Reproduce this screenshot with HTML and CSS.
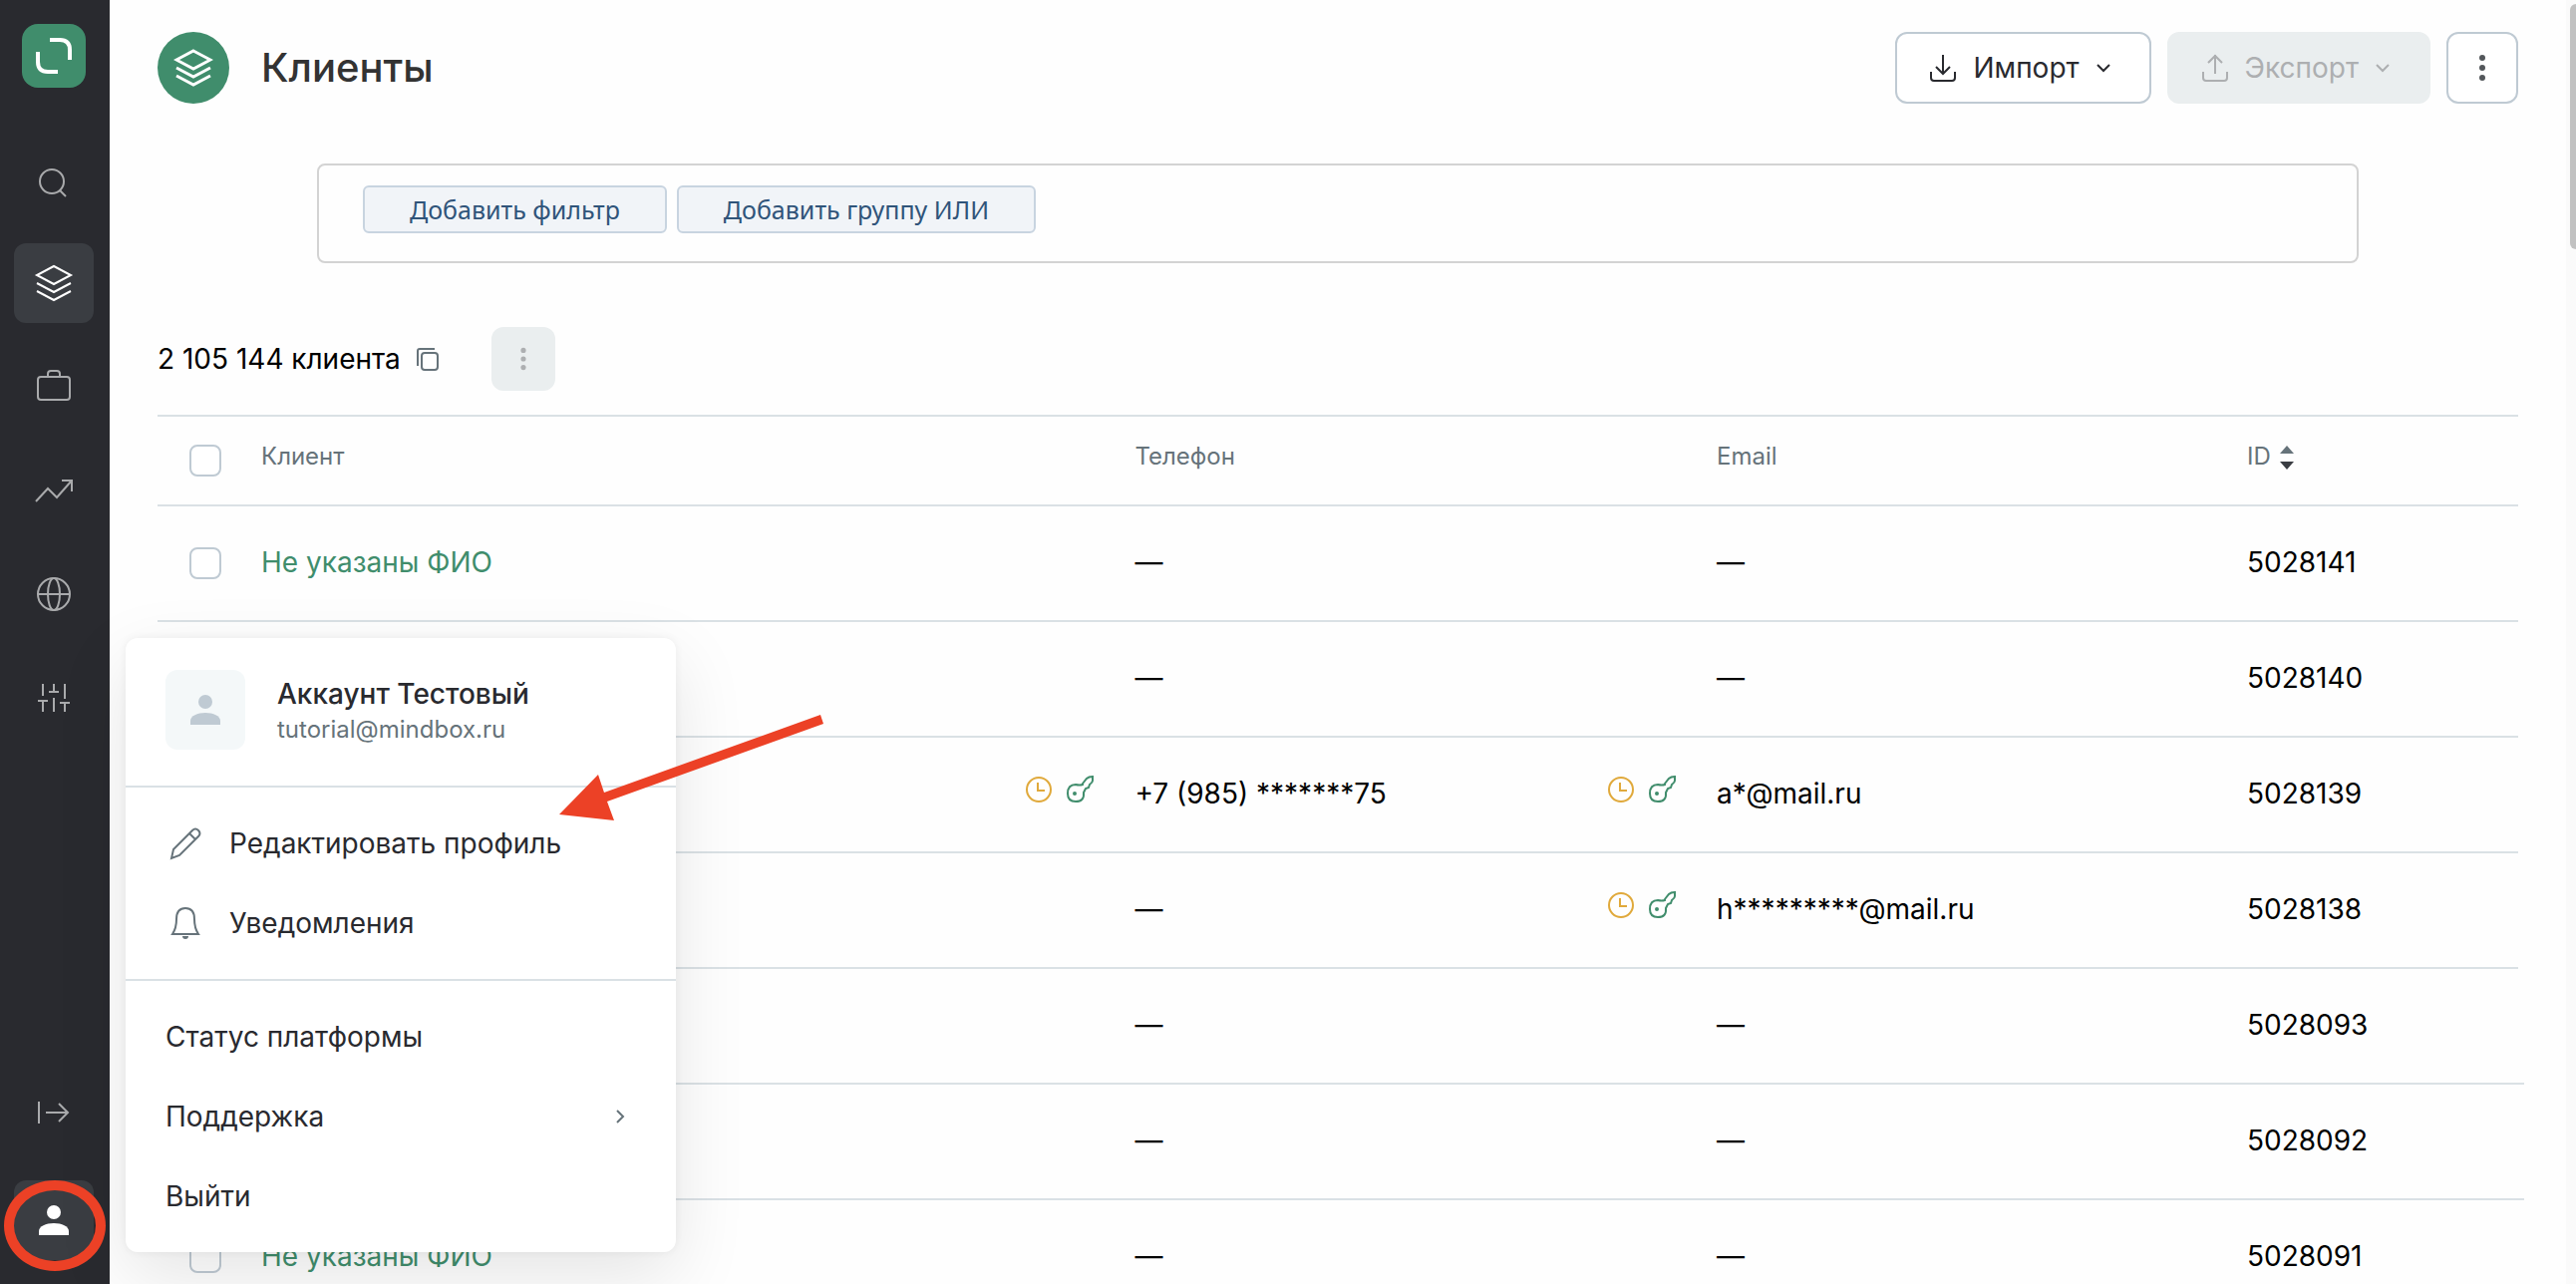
FILE: index.html
```html
<!DOCTYPE html>
<html lang="ru">
<head>
<meta charset="utf-8">
<meta name="viewport" content="width=device-width, initial-scale=1">
<title>Клиенты</title>
<link rel="stylesheet" href="styles.css">
</head>
<body>
<svg class="sprite" aria-hidden="true">
  <symbol id="layers" viewBox="0 0 40 40"><path d="M20 3 37 12 20 21 3 12ZM3 20l17 9 17-9M3 28l17 9 17-9"/></symbol>
  <symbol id="person" viewBox="0 0 30 30"><ellipse cx="15" cy="7" rx="7" ry="7"/><path d="M0 30v-4c0-5 7-8 15-8s15 3 15 8v4Z"/></symbol>
  <symbol id="dots" viewBox="0 0 28 28"><circle cx="14" cy="4" r="3"/><circle cx="14" cy="14" r="3"/><circle cx="14" cy="24" r="3"/></symbol>
  <symbol id="clock" viewBox="0 0 28 28"><circle cx="14" cy="14" r="12"/><path d="M13 7v8h7"/></symbol>
  <symbol id="key" viewBox="0 0 28 28"><path d="M16 8 20 3q2-2 6-2v4q0 2-3 4l-1 3-3 1-2 4q1 9-8 9-8 0-8-8 0-9 8-9 4 1 7 0Z"/><circle cx="8" cy="18" r="1"/></symbol>
</svg>
<div class="shell">
  <aside class="sidebar">
    <a class="logo" href="#" aria-label="Mindbox"><svg width="64" height="64" viewBox="0 0 64 64"><path d="M28 16h10q10 0 10 10v10M16 28v10q0 10 10 10h10"/></svg></a>
    <nav class="nav">
      <a href="#" aria-label="Поиск"><svg class="line" width="40" height="40" viewBox="0 0 40 40"><circle cx="18" cy="22" r="12"/><path d="m26 31 6 6"/></svg></a>
      <a href="#" class="active" aria-label="Клиенты"><svg class="line" width="40" height="40"><use href="#layers"/></svg></a>
      <a href="#" aria-label="Кампании"><svg class="line" width="40" height="40" viewBox="0 0 40 40"><rect x="4" y="10" width="32" height="23" rx="3"/><path d="M14 10V7q0-3 3-3h6q3 0 3 3v3"/></svg></a>
      <a href="#" aria-label="Отчёты"><svg class="line" width="40" height="40" viewBox="0 0 40 40"><path d="m2 31 12-13 9 9 15-17M28 10h10v11"/></svg></a>
      <a href="#" aria-label="Интеграции"><svg class="line" width="40" height="40" viewBox="0 0 40 40"><circle cx="20" cy="20" r="16"/><ellipse cx="20" cy="20" rx="6" ry="16"/><path d="M4 20h32"/></svg></a>
      <a href="#" aria-label="Настройки"><svg class="line" width="40" height="40" viewBox="0 0 40 40"><path d="M9 6v12M4 23h10M9 23v11M20 6v8M15 14h10M20 20v14M31 6v15M26 25h10M31 25v9"/></svg></a>
    </nav>
    <div class="nav nav-bottom">
      <a href="#" aria-label="Развернуть"><svg class="line" width="40" height="40" viewBox="0 0 40 40"><path d="M5 9v22M12 20h22M25 11l9 9-9 9"/></svg></a>
      <button class="user" aria-label="Профиль"><svg width="30" height="30"><use href="#person"/></svg></button>
    </div>
  </aside>

  <main class="main">
    <header class="page-head">
      <span class="badge"><svg class="line thick" width="40" height="40"><use href="#layers"/></svg></span>
      <h1>Клиенты</h1>
      <button class="btn"><svg class="line" width="28" height="28" viewBox="0 0 28 28"><path d="M14 1v19M7 13l7 7 7-7M2 18v6q0 3 3 3h18q3 0 3-3v-6"/></svg>Импорт<svg class="line" width="16" height="16" viewBox="0 0 16 16"><path d="m2 5 6 6 6-6"/></svg></button>
      <button class="btn" disabled><svg class="line" width="28" height="28" viewBox="0 0 28 28"><path d="M14 20V1M7 9l7-7 7 7M2 18v6q0 3 3 3h18q3 0 3-3v-6"/></svg>Экспорт<svg class="line" width="16" height="16" viewBox="0 0 16 16"><path d="m2 5 6 6 6-6"/></svg></button>
      <button class="btn btn-more" aria-label="Ещё"><svg width="28" height="28"><use href="#dots"/></svg></button>
    </header>

    <section class="filters">
      <button>Добавить фильтр</button>
      <button>Добавить группу ИЛИ</button>
    </section>

    <div class="summary">
      <span>2 105 144 клиента</span>
      <button class="copy" aria-label="Копировать"><svg class="line" width="24" height="24" viewBox="0 0 24 24"><rect x="6" y="6" width="16" height="17" rx="3"/><path d="M2 19V4q0-2 2-2h15"/></svg></button>
      <button class="more" aria-label="Действия" disabled><svg width="24" height="24"><use href="#dots"/></svg></button>
    </div>

    <table class="clients">
      <colgroup><col class="c-check"><col><col class="c-icons"><col class="c-phone"><col class="c-icons"><col class="c-email"><col class="c-id"></colgroup>
      <thead><tr>
        <th><input type="checkbox" aria-label="Выбрать всех"></th>
        <th>Клиент</th><th></th><th>Телефон</th><th></th><th>Email</th>
        <th>ID <svg class="sort" width="14" height="24" viewBox="0 0 14 24"><path d="M0 8 7 0l7 8Z"/><path class="down" d="M0 16h14l-7 8Z"/></svg></th>
      </tr></thead>
      <tbody>
        <tr><td><input type="checkbox" aria-label="5028141"></td><td><a href="#">Не указаны ФИО</a></td><td></td><td>—</td><td></td><td>—</td><td>5028141</td></tr>
        <tr><td><input type="checkbox" aria-label="5028140"></td><td></td><td></td><td>—</td><td></td><td>—</td><td>5028140</td></tr>
        <tr><td><input type="checkbox" aria-label="5028139"></td><td></td><td class="marks"><svg class="line clock" width="28" height="28"><use href="#clock"/></svg><svg class="line key" width="28" height="28"><use href="#key"/></svg></td><td>+7 (985) *******75</td><td class="marks"><svg class="line clock" width="28" height="28"><use href="#clock"/></svg><svg class="line key" width="28" height="28"><use href="#key"/></svg></td><td>a*@mail.ru</td><td>5028139</td></tr>
        <tr><td><input type="checkbox" aria-label="5028138"></td><td></td><td></td><td>—</td><td class="marks"><svg class="line clock" width="28" height="28"><use href="#clock"/></svg><svg class="line key" width="28" height="28"><use href="#key"/></svg></td><td>h*********@mail.ru</td><td>5028138</td></tr>
        <tr class="wide"><td><input type="checkbox" aria-label="5028093"></td><td></td><td></td><td>—</td><td></td><td>—</td><td>5028093</td></tr>
        <tr class="wide"><td><input type="checkbox" aria-label="5028092"></td><td></td><td></td><td>—</td><td></td><td>—</td><td>5028092</td></tr>
        <tr class="wide"><td><input type="checkbox" aria-label="5028091"></td><td><a href="#">Не указаны ФИО</a></td><td></td><td>—</td><td></td><td>—</td><td>5028091</td></tr>
      </tbody>
    </table>
  </main>
  <div class="track"><div class="thumb"></div></div>

  <div class="menu">
    <div class="account">
      <span class="avatar"><svg width="30" height="30"><use href="#person"/></svg></span>
      <div><div class="name">Аккаунт Тестовый</div><div class="mail">tutorial@mindbox.ru</div></div>
    </div>
    <div class="group">
      <a href="#"><svg class="line" width="40" height="40" viewBox="0 0 40 40"><path d="M6 35 8 26 27 7q3-3 6 0t0 6L14 32ZM24 10l6 6"/></svg>Редактировать профиль</a>
      <a href="#"><svg class="line" width="40" height="40" viewBox="0 0 40 40"><path d="M7 31q4-6 4-15 0-11 9-11t9 11q0 9 4 15Z"/><path class="solid" d="M17 33h6q0 3-3 3t-3-3Z"/></svg>Уведомления</a>
    </div>
    <div class="group">
      <a href="#">Статус платформы</a>
      <a href="#">Поддержка<svg class="line chevron" width="16" height="16" viewBox="0 0 16 16"><path d="m5 2 6 6-6 6"/></svg></a>
      <a href="#">Выйти</a>
    </div>
  </div>

  <svg class="mark-arrow" width="270" height="110" viewBox="0 0 270 110"><path d="M0 101 39 61l6 18L262 1l3 9L48 88l7 19Z"/></svg>
  <span class="mark-ring"></span>
</div>
</body>
</html>
```
FILE: styles.css
```css
* { box-sizing: border-box; }

body {
  margin: 0;
  font: 28px/40px Inter, "Liberation Sans", sans-serif;
  color: #000;
  background: #fefefe;
}

button { font: inherit; cursor: pointer; }
a { text-decoration: none; }
svg { flex: none; fill: currentColor; }
.line { fill: none; stroke: currentColor; stroke-width: 2; }
.thick { stroke-width: 3; }
.solid { fill: currentColor; stroke: none; }
.sprite { position: absolute; width: 0; height: 0; }

.shell {
  position: relative;
  display: flex;
  height: 100vh;
  overflow: hidden;
}

/* Sidebar */
.sidebar {
  flex: none;
  display: flex;
  flex-direction: column;
  align-items: center;
  width: 110px;
  padding: 24px 2px 24px 0;
  background: #292a2f;
}
.logo {
  width: 64px;
  height: 64px;
  border-radius: 16px;
  background: #408d6c;
}
.logo svg { display: block; fill: none; stroke: #fff; stroke-width: 4; }
.nav {
  display: flex;
  flex-direction: column;
  gap: 24px;
  margin-top: 52px;
}
.nav a, .user {
  display: flex;
  align-items: center;
  justify-content: center;
  width: 80px;
  height: 80px;
  border-radius: 12px;
  color: #a9aaac;
}
.nav .active { background: #3a3d42; color: #fff; }
.nav-bottom { margin-top: auto; gap: 28px; }
.user {
  padding: 0;
  border: 0;
  background: #3a3d42;
  color: #fff;
}

/* Page */
.main {
  flex: 1;
  min-width: 0;
  padding: 32px 48px 0;
}
.page-head {
  display: flex;
  align-items: center;
  gap: 16px;
}
.badge {
  display: flex;
  align-items: center;
  justify-content: center;
  width: 72px;
  height: 72px;
  border-radius: 50%;
  background: #408d6c;
  color: #fff;
}
h1 {
  flex: 1;
  margin: 0 0 0 16px;
  font-size: 40px;
  line-height: 48px;
  font-weight: 500;
  color: #333;
}
.btn {
  display: flex;
  align-items: center;
  gap: 16px;
  height: 72px;
  padding: 0 38px 0 32px;
  border: 2px solid #bfcad3;
  border-radius: 12px;
  background: #fff;
  color: #292a2f;
}
.btn:disabled {
  border-color: #eaeeef;
  background: #eaeeef;
  color: #adafb1;
}
.btn-more {
  justify-content: center;
  width: 72px;
  padding: 0;
  color: #53575b;
}

.filters {
  display: flex;
  gap: 10px;
  margin: 60px 160px 64px;
  padding: 20px 44px 28px;
  border: 2px solid #d3d3d3;
  border-radius: 8px;
}
.filters button {
  height: 48px;
  padding: 0 45px;
  border: 2px solid #c8d4e0;
  border-radius: 6px;
  background: #f1f4f8;
  color: #30547a;
  font-family: "Noto Sans", sans-serif;
  font-size: 25px;
  line-height: 40px;
}

.summary {
  display: flex;
  align-items: center;
  margin-bottom: 24px;
}
.copy {
  display: flex;
  margin: 0 52px 0 15px;
  padding: 0;
  border: 0;
  background: none;
  color: #66737a;
}
.more {
  display: flex;
  align-items: center;
  justify-content: center;
  width: 64px;
  height: 64px;
  padding: 0;
  border: 0;
  border-radius: 12px;
  background: #eaeeef;
  color: #adafb1;
}

/* Table */
.clients {
  width: 100%;
  table-layout: fixed;
  border-spacing: 0;
}
.c-check { width: 104px; }
.c-icons { width: 110px; }
.c-phone { width: 20%; }
.c-email { width: 532px; }
.c-id { width: 272px; }
th, td {
  padding: 0;
  border-bottom: 2px solid #dae1e5;
  text-align: left;
}
th {
  height: 92px;
  padding-bottom: 8px;
  border-top: 2px solid #dae1e5;
  font-size: 24px;
  line-height: 32px;
  font-weight: 400;
  color: #66737a;
}
td { height: 116px; padding-bottom: 2px; }
th:first-child, td:first-child { padding: 0 0 0 32px; }
td a { color: #408d6c; }
.wide td:last-child { position: relative; }
.wide td:last-child::after {
  content: "";
  position: absolute;
  right: -6px;
  bottom: -2px;
  width: 6px;
  height: 2px;
  background: #dae1e5;
}
input[type="checkbox"] {
  appearance: none;
  display: block;
  width: 32px;
  height: 32px;
  margin: 0;
  border: 2px solid #bfcad3;
  border-radius: 8px;
  background: #fff;
}
.sort { margin-left: 2px; color: #66737a; vertical-align: middle; }
.down { fill: #3a3d42; }
.marks { padding-bottom: 14px; }
.marks svg { vertical-align: middle; }
.clock { margin-right: 14px; color: #e0a93b; }
.key { color: #408d6c; }

.track {
  flex: none;
  width: 10px;
  padding: 4px 0 0 4px;
  background: #fafafa;
}
.thumb {
  height: 246px;
  border-radius: 6px 0 0 6px;
  background: #c1c1c1;
}

/* Account menu */
.menu {
  position: absolute;
  left: 126px;
  bottom: 32px;
  width: 552px;
  border-radius: 12px;
  background: #fff;
  color: #292a2f;
  box-shadow: 0 0 8px rgba(0, 0, 0, .06), 0 24px 72px rgba(0, 0, 0, .1);
}
.account {
  display: flex;
  gap: 32px;
  padding: 32px 40px 36px;
}
.avatar {
  display: flex;
  align-items: center;
  justify-content: center;
  width: 80px;
  height: 80px;
  border-radius: 12px;
  background: #f4f8f9;
  color: #bfcad3;
}
.name { padding-top: 4px; font-weight: 500; }
.mail { font-size: 24px; line-height: 32px; color: #66737a; }
.group {
  padding: 16px 40px;
  border-top: 2px solid #dae1e5;
}
.group a {
  display: flex;
  align-items: center;
  gap: 24px;
  height: 80px;
  color: inherit;
}
.group svg { color: #66737a; }
.chevron { margin: 0 8px 0 auto; }

/* Tutorial marks */
.mark-arrow {
  position: absolute;
  left: 561px;
  bottom: 462px;
  color: #ec4126;
}
.mark-ring {
  position: absolute;
  left: 4px;
  bottom: 13px;
  width: 102px;
  height: 91px;
  border: 10px solid #ec4126;
  border-radius: 50%;
}
```
